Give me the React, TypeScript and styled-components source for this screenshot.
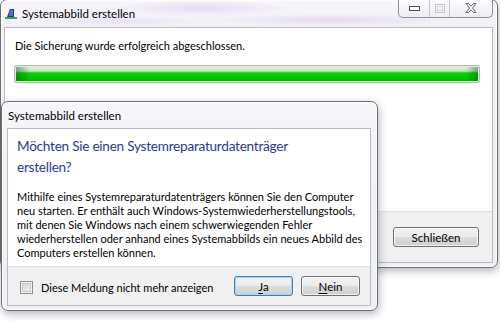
import styled, { createGlobalStyle } from "styled-components";

const GlobalStyle = createGlobalStyle`
  html, body {
    margin: 0;
    padding: 0;
    background: #ffffff;
  }
  body {
    font-family: "Segoe UI", Lato, "Liberation Sans", sans-serif;
    font-size: 11px;
    color: #000;
  }
`;

const Desktop = styled.div`
  position: relative;
  width: 500px;
  height: 321px;
  overflow: hidden;
  background: #ffffff;
`;

const Frame = styled.div<{ $left: number; $top: number; $width: number; $height: number; $pad: string }>`
  position: absolute;
  left: ${(p) => p.$left}px;
  top: ${(p) => p.$top}px;
  width: ${(p) => p.$width}px;
  height: ${(p) => p.$height}px;
  box-sizing: border-box;
  display: flex;
  flex-direction: column;
  padding: ${(p) => p.$pad};
  border: 1px solid #6a6d72;
  border-radius: 7px;
  background: linear-gradient(180deg, #f7f6fa 0%, #f1f1f5 30%, #eef0f3 100%);
  box-shadow: 1px 3px 8px rgba(40, 50, 70, 0.35), inset 0 0 0 1px rgba(255, 255, 255, 0.8);
`;

const MainFrame = styled(Frame)`
  background:
    radial-gradient(ellipse 90px 8px at 200px 8px, rgba(200, 170, 230, 0.35), transparent),
    radial-gradient(ellipse 120px 6px at 330px 20px, rgba(190, 160, 225, 0.3), transparent),
    radial-gradient(ellipse 80px 5px at 120px 21px, rgba(200, 170, 230, 0.25), transparent),
    linear-gradient(180deg, #f8f6fb 0%, #f3f1f7 25px, #eef0f3 100%);
`;

const TitleBar = styled.div<{ $height: number; $indent: number }>`
  height: ${(p) => p.$height}px;
  flex: none;
  display: flex;
  align-items: center;
  gap: 5px;
  padding-left: ${(p) => p.$indent}px;
  font-size: 11.5px;
  color: #000;
  white-space: nowrap;
`;

const Client = styled.div`
  flex: 1;
  display: flex;
  flex-direction: column;
  border: 1px solid #b8bcc2;
  background: #f0f0f0;
  min-height: 0;
`;

const Content = styled.div<{ $pad: string }>`
  flex: 1;
  background: #ffffff;
  padding: ${(p) => p.$pad};
  display: flex;
  flex-direction: column;
  align-items: flex-start;
`;

const Footer = styled.div<{ $height: number; $pad: string }>`
  height: ${(p) => p.$height}px;
  flex: none;
  display: flex;
  align-items: center;
  padding: ${(p) => p.$pad};
  border-top: 1px solid #dfdfdf;
  background: #f0f0f0;
`;

const StatusText = styled.div`
  line-height: 16px;
  font-size: 11px;
`;

const Progress = styled.div`
  margin: 11px 0 0 -1px;
  align-self: stretch;
  height: 18px;
  box-sizing: border-box;
  border: 1px solid #b6b6b6;
  border-radius: 2px;
  background: #e6e6e6;
  padding: 1px;
`;

const ProgressFill = styled.div`
  height: 100%;
  background:
    linear-gradient(90deg, rgba(0, 90, 0, 0.45) 0, rgba(0, 90, 0, 0) 14px, rgba(0, 90, 0, 0) calc(100% - 12px), rgba(0, 90, 0, 0.45) 100%),
    linear-gradient(180deg, #d8f5d8 0%, #b4ecb4 30%, #08d108 42%, #02c802 70%, #00b800 100%);
`;

const Heading = styled.div`
  font-size: 13.6px;
  letter-spacing: -0.25px;
  line-height: 21px;
  color: #1f3d99;
  white-space: nowrap;
`;

const Body = styled.div`
  margin-top: 12px;
  font-size: 11px;
  line-height: 14px;
  white-space: nowrap;
`;

const CaptionGroup = styled.div`
  position: absolute;
  top: -1px;
  right: 4px;
  display: flex;
  height: 18px;
  border: 1px solid #8e9196;
  border-top: none;
  border-radius: 0 0 5px 5px;
  background: linear-gradient(180deg, rgba(255, 255, 255, 0.7), rgba(235, 236, 240, 0.7));
  overflow: hidden;
`;

const CaptionButton = styled.div<{ $width: number }>`
  width: ${(p) => p.$width}px;
  display: flex;
  align-items: center;
  justify-content: center;
  & + & {
    border-left: 1px solid #c6c8cc;
  }
`;

const PushButton = styled.div<{ $width: number; $default?: boolean }>`
  width: ${(p) => p.$width}px;
  height: 20px;
  box-sizing: border-box;
  display: flex;
  align-items: center;
  justify-content: center;
  font-size: 11.5px;
  color: #000;
  border: 1px solid ${(p) => (p.$default ? "#3c7fb1" : "#707070")};
  border-radius: 3px;
  background: linear-gradient(180deg, #f2f2f2 0%, #ebebeb 50%, #dddddd 50%, #cfcfcf 100%);
  box-shadow: inset 0 0 0 1px ${(p) => (p.$default ? "rgba(150, 215, 245, 0.9)" : "rgba(255, 255, 255, 0.7)")};
  & u {
    text-decoration: underline;
    text-underline-offset: 2px;
  }
`;

const ButtonRow = styled.div`
  margin-left: auto;
  display: flex;
  gap: 8px;
`;

const CheckLabel = styled.label`
  display: flex;
  align-items: center;
  gap: 8px;
  margin-top: 3px;
  font-size: 11px;
  white-space: nowrap;
`;

const CheckBox = styled.span`
  width: 13px;
  height: 13px;
  flex: none;
  box-sizing: border-box;
  border: 1px solid #8f8f8f;
  background: linear-gradient(135deg, #d2d2d2, #f6f6f6);
  box-shadow: inset 0 0 0 1px #f4f4f4, inset 0 0 0 2px #c9c9c9;
`;

function AppIcon() {
  return (
    <svg width="12" height="11" viewBox="0 0 12 11">
      <path d="M2 9 L5 1 L9 1 L9 9 Z" fill="#1f3a8c" />
      <path d="M5 2 L8 2 L8 8 L3.5 8 Z" fill="#4d73c9" />
      <rect x="0" y="9" width="12" height="2" fill="#3aa23a" />
    </svg>
  );
}

export default function App() {
  return (
    <>
      <GlobalStyle />
      <Desktop>
        <MainFrame $left={0} $top={-1} $width={498} $height={269} $pad="0 4px 4px 3px">
          <TitleBar $height={27} $indent={1}>
            <AppIcon />
            <span>Systemabbild erstellen</span>
          </TitleBar>
          <CaptionGroup>
            <CaptionButton $width={30}>
              <svg width="11" height="5" viewBox="0 0 11 5">
                <rect x="0.5" y="0.5" width="10" height="4" fill="#fff" stroke="#4a4d52" />
              </svg>
            </CaptionButton>
            <CaptionButton $width={19}>
              <svg width="10" height="9" viewBox="0 0 10 9">
                <rect x="0.5" y="0.5" width="9" height="8" fill="none" stroke="#c4c6ca" />
                <rect x="2.5" y="2.5" width="5" height="4" fill="none" stroke="#d4d6da" />
              </svg>
            </CaptionButton>
            <CaptionButton $width={42}>
              <svg width="12" height="10" viewBox="0 0 12 10">
                <path
                  d="M1 0.5 L3.5 0.5 L6 3 L8.5 0.5 L11 0.5 L7.5 5 L11 9.5 L8.5 9.5 L6 7 L3.5 9.5 L1 9.5 L4.5 5 Z"
                  fill="#eeeeee"
                  stroke="#5a5d62"
                  strokeWidth="0.9"
                />
              </svg>
            </CaptionButton>
          </CaptionGroup>
          <Client>
            <Content $pad="10px 12px 0 10px">
              <StatusText>Die Sicherung wurde erfolgreich abgeschlossen.</StatusText>
              <Progress>
                <ProgressFill />
              </Progress>
            </Content>
            <Footer $height={50} $pad="0 13px 0 0">
              <ButtonRow>
                <PushButton $width={86}>Schließen</PushButton>
              </ButtonRow>
            </Footer>
          </Client>
        </MainFrame>

        <Frame $left={1} $top={101} $width={377} $height={210} $pad="0 6px 4px 5px">
          <TitleBar $height={26} $indent={1}>
            <span>Systemabbild erstellen</span>
          </TitleBar>
          <Client>
            <Content $pad="7px 10px 0 9px">
              <Heading>
                Möchten Sie einen Systemreparaturdatenträger
                <br />
                erstellen?
              </Heading>
              <Body>
                Mithilfe eines Systemreparaturdatenträgers können Sie den Computer
                <br />
                neu starten. Er enthält auch Windows-Systemwiederherstellungstools,
                <br />
                mit denen Sie Windows nach einem schwerwiegenden Fehler
                <br />
                wiederherstellen oder anhand eines Systemabbilds ein neues Abbild des
                <br />
                Computers erstellen können.
              </Body>
            </Content>
            <Footer $height={38} $pad="0 10px 0 12px">
              <CheckLabel>
                <CheckBox />
                Diese Meldung nicht mehr anzeigen
              </CheckLabel>
              <ButtonRow>
                <PushButton $width={59} $default>
                  <u>J</u>a
                </PushButton>
                <PushButton $width={59}>
                  <u>N</u>ein
                </PushButton>
              </ButtonRow>
            </Footer>
          </Client>
        </Frame>
      </Desktop>
    </>
  );
}
